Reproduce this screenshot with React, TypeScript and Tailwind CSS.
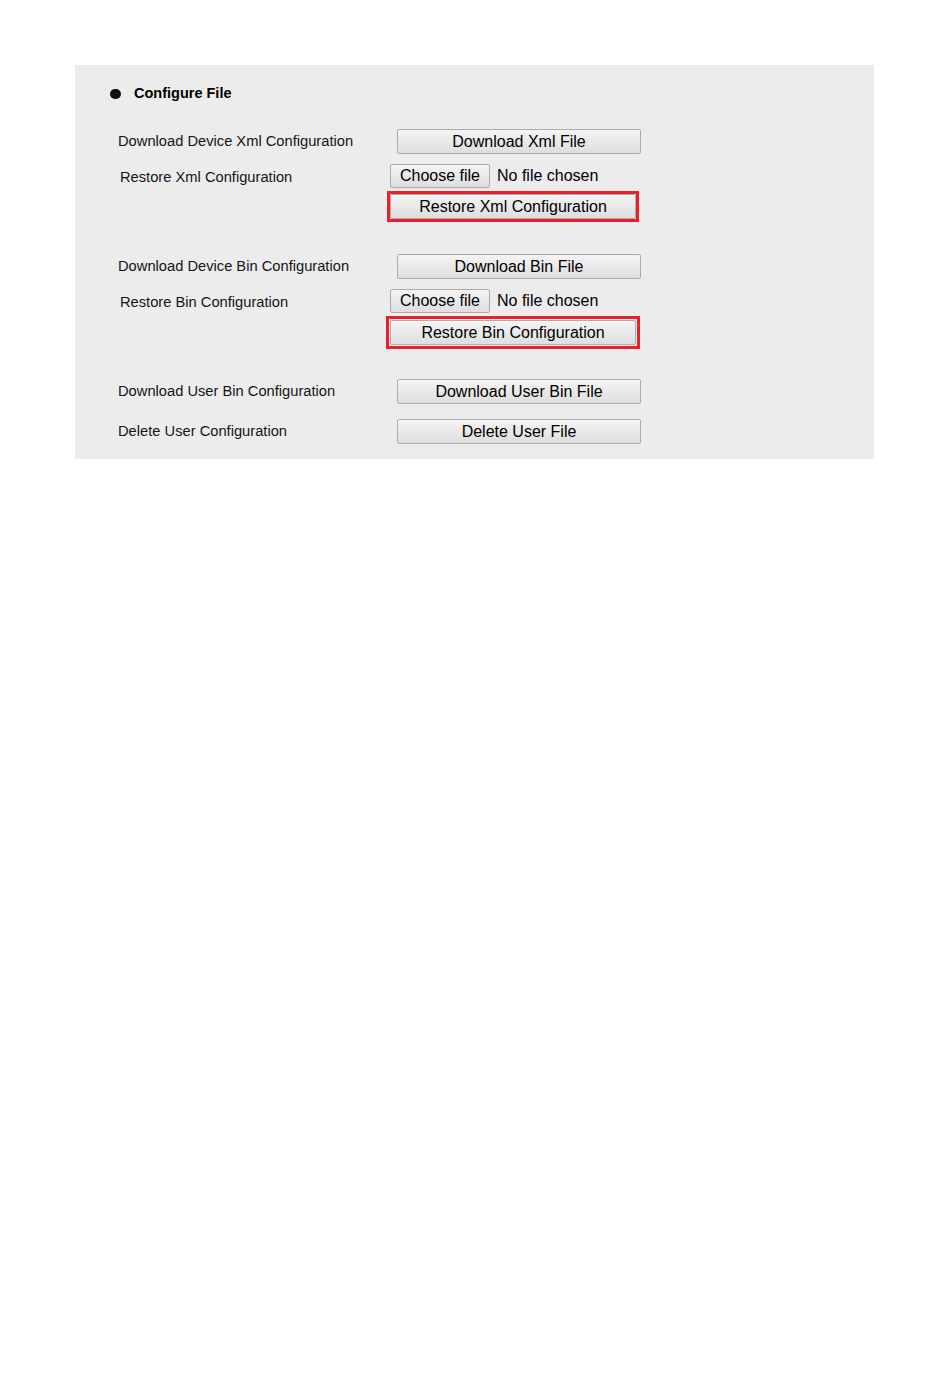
import React from 'react';

const font = { fontFamily: '"Liberation Sans", Arial, sans-serif' };

const btn =
  'flex items-center justify-center border border-[#acacac] rounded-[2px] bg-gradient-to-b from-[#f4f4f4] to-[#dedede] text-[16px] text-black leading-none';

const Label: React.FC<{ text: string; inset?: boolean }> = ({ text, inset }) => (
  <div className={`w-[268px] shrink-0 text-[14.7px] text-[#151515] ${inset ? 'pl-[2px] pt-[2px]' : ''}`}>{text}</div>
);

const DownloadRow: React.FC<{ label: string; button: string; className?: string }> = ({ label, button, className }) => (
  <div className={`flex items-center h-[25px] ${className ?? ''}`}>
    <Label text={label} />
    <button className={`${btn} ml-[11px] w-[244px] h-[25px]`}>{button}</button>
  </div>
);

const RestoreBlock: React.FC<{ label: string; button: string; framePad: string; frameMl: string; frameH: string }> = ({
  label,
  button,
  framePad,
  frameMl,
  frameH,
}) => (
  <>
    <div className="flex items-center h-[24px] mt-[10px]">
      <Label text={label} inset />
      <button className={`${btn} ml-[4px] w-[100px] h-[24px]`}>Choose file</button>
      <span className="ml-[7px] text-[16px] text-black">No file chosen</span>
    </div>
    <div className="flex mt-[3px]">
      <div className="w-[268px] shrink-0" />
      <div className={`border-[3px] border-[#e8202a] ${framePad} ${frameMl} ${frameH}`}>
        <button className={`${btn} w-[246px] h-[25px]`}>{button}</button>
      </div>
    </div>
  </>
);

export default function App() {
  return (
    <div className="min-h-[1397px] bg-white pt-[65px] pl-[75px]" style={font}>
      <div className="w-[799px] bg-[#ececec] pl-[43px] pt-[20px] pb-[15px]">
        <div className="flex items-center h-[18px] -ml-[8px]">
          <span className="w-[11px] h-[10px] rounded-full bg-[#111]" />
          <span className="ml-[13px] text-[14.5px] font-bold text-black">Configure File</span>
        </div>

        <DownloadRow label="Download Device Xml Configuration" button="Download Xml File" className="mt-[26px]" />
        <RestoreBlock
          label="Restore Xml Configuration"
          button="Restore Xml Configuration"
          framePad="p-0"
          frameMl="ml-[1px]"
          frameH="h-[31px]"
        />

        <DownloadRow label="Download Device Bin Configuration" button="Download Bin File" className="mt-[32px]" />
        <RestoreBlock
          label="Restore Bin Configuration"
          button="Restore Bin Configuration"
          framePad="px-[1px] py-[1px]"
          frameMl="ml-0"
          frameH="h-[33px]"
        />

        <DownloadRow label="Download User Bin Configuration" button="Download User Bin File" className="mt-[30px]" />
        <DownloadRow label="Delete User Configuration" button="Delete User File" className="mt-[15px]" />
      </div>
    </div>
  );
}
